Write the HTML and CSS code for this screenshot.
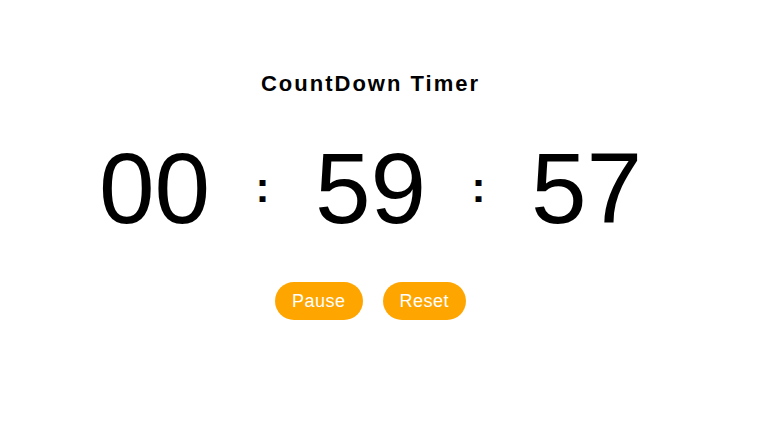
FILE: index.html
```html
<!DOCTYPE html>
<html>
<head>
<meta charset="utf-8">
<link rel="stylesheet" href="styles.css">
</head>
<body>
<div class="app">
  <h1 class="title">CountDown Timer</h1>
  <div class="clock">
    <span class="num">00</span>
    <span class="colon">:</span>
    <span class="num">59</span>
    <span class="colon">:</span>
    <span class="num">57</span>
  </div>
  <div class="actions">
    <button class="btn">Pause</button>
    <button class="btn">Reset</button>
  </div>
</div>
</body>
</html>
```
FILE: styles.css
```css
html, body {
  margin: 0;
  padding: 0;
  background: #fff;
}
body {
  font-family: "Liberation Sans", Arial, sans-serif;
  color: #000;
}
.app {
  display: flex;
  flex-direction: column;
  align-items: center;
  padding: 71px 40px 0 0;
}
.title {
  margin: 0;
  font-size: 22px;
  line-height: 26px;
  font-weight: bold;
  letter-spacing: 2px;
}
.clock {
  display: flex;
  align-items: center;
  margin-top: 41px;
}
.num {
  width: 150px;
  text-align: center;
  font-size: 100px;
  line-height: 100px;
}
.colon {
  width: 66px;
  text-align: center;
  font-size: 42px;
  line-height: 42px;
  font-weight: bold;
}
.actions {
  display: flex;
  gap: 20px;
  margin-top: 44px;
}
.btn {
  height: 38px;
  padding: 0 17px;
  border: none;
  border-radius: 19px;
  background: #ffa500;
  color: #fff;
  font-family: "Liberation Sans", Arial, sans-serif;
  font-size: 18px;
  letter-spacing: 0.5px;
}
```
